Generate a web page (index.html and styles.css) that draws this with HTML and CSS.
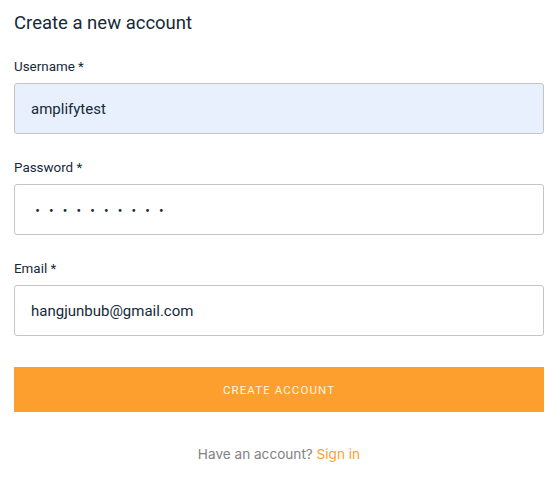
FILE: index.html
```html
<!DOCTYPE html>
<html lang="en">
<head>
<meta charset="utf-8">
<title>Create a new account</title>
<link rel="stylesheet" href="styles.css">
</head>
<body>
<main class="form">
  <h1 class="title">Create a new account</h1>
  <div class="field">
    <label class="label">Username *</label>
    <div class="input input-filled">amplifytest</div>
  </div>
  <div class="field">
    <label class="label">Password *</label>
    <div class="input"><span class="dots">••••••••••</span></div>
  </div>
  <div class="field">
    <label class="label">Email *</label>
    <div class="input">hangjunbub@gmail.com</div>
  </div>
  <button class="submit">CREATE ACCOUNT</button>
  <p class="footer">Have an account? <a class="link">Sign in</a></p>
</main>
</body>
</html>
```
FILE: styles.css
```css
html, body {
  margin: 0;
  padding: 0;
  background: #ffffff;
}
body {
  font-family: Roboto, "Noto Sans", sans-serif;
  color: #152939;
}
.form {
  padding: 11px 12px 0 14px;
  display: flex;
  flex-direction: column;
}
.title {
  margin: 0 0 22px 0;
  font-size: 18.5px;
  line-height: 24px;
  font-weight: 400;
  color: #152939;
}
.field {
  display: flex;
  flex-direction: column;
  gap: 6px;
  margin-bottom: 24px;
}
.label {
  font-size: 13.4px;
  line-height: 20px;
  color: #152939;
}
.input {
  box-sizing: border-box;
  height: 51px;
  border: 1px solid #c4c4c4;
  border-radius: 3px;
  padding: 0 16px;
  display: flex;
  align-items: center;
  font-size: 15px;
  color: #152939;
  background: #ffffff;
}
.input-filled {
  background: #e8f0fe;
}
.dots {
  font-family: Inter, sans-serif;
  font-size: 9px;
  letter-spacing: 8.7px;
  padding-left: 4px;
}
.submit {
  margin-top: 7px;
  height: 45px;
  border: none;
  border-radius: 0;
  background: #fd9f2e;
  color: #fff4e6;
  font-family: Roboto, "Noto Sans", sans-serif;
  font-size: 11.5px;
  letter-spacing: 1.1px;
  font-weight: 400;
  cursor: pointer;
}
.footer {
  margin: 32px 0 0 0;
  text-align: center;
  font-family: Inter, "Noto Sans", sans-serif;
  font-size: 13.6px;
  line-height: 20px;
  color: #828282;
}
.link {
  color: #fd9f2e;
  cursor: pointer;
}
```
